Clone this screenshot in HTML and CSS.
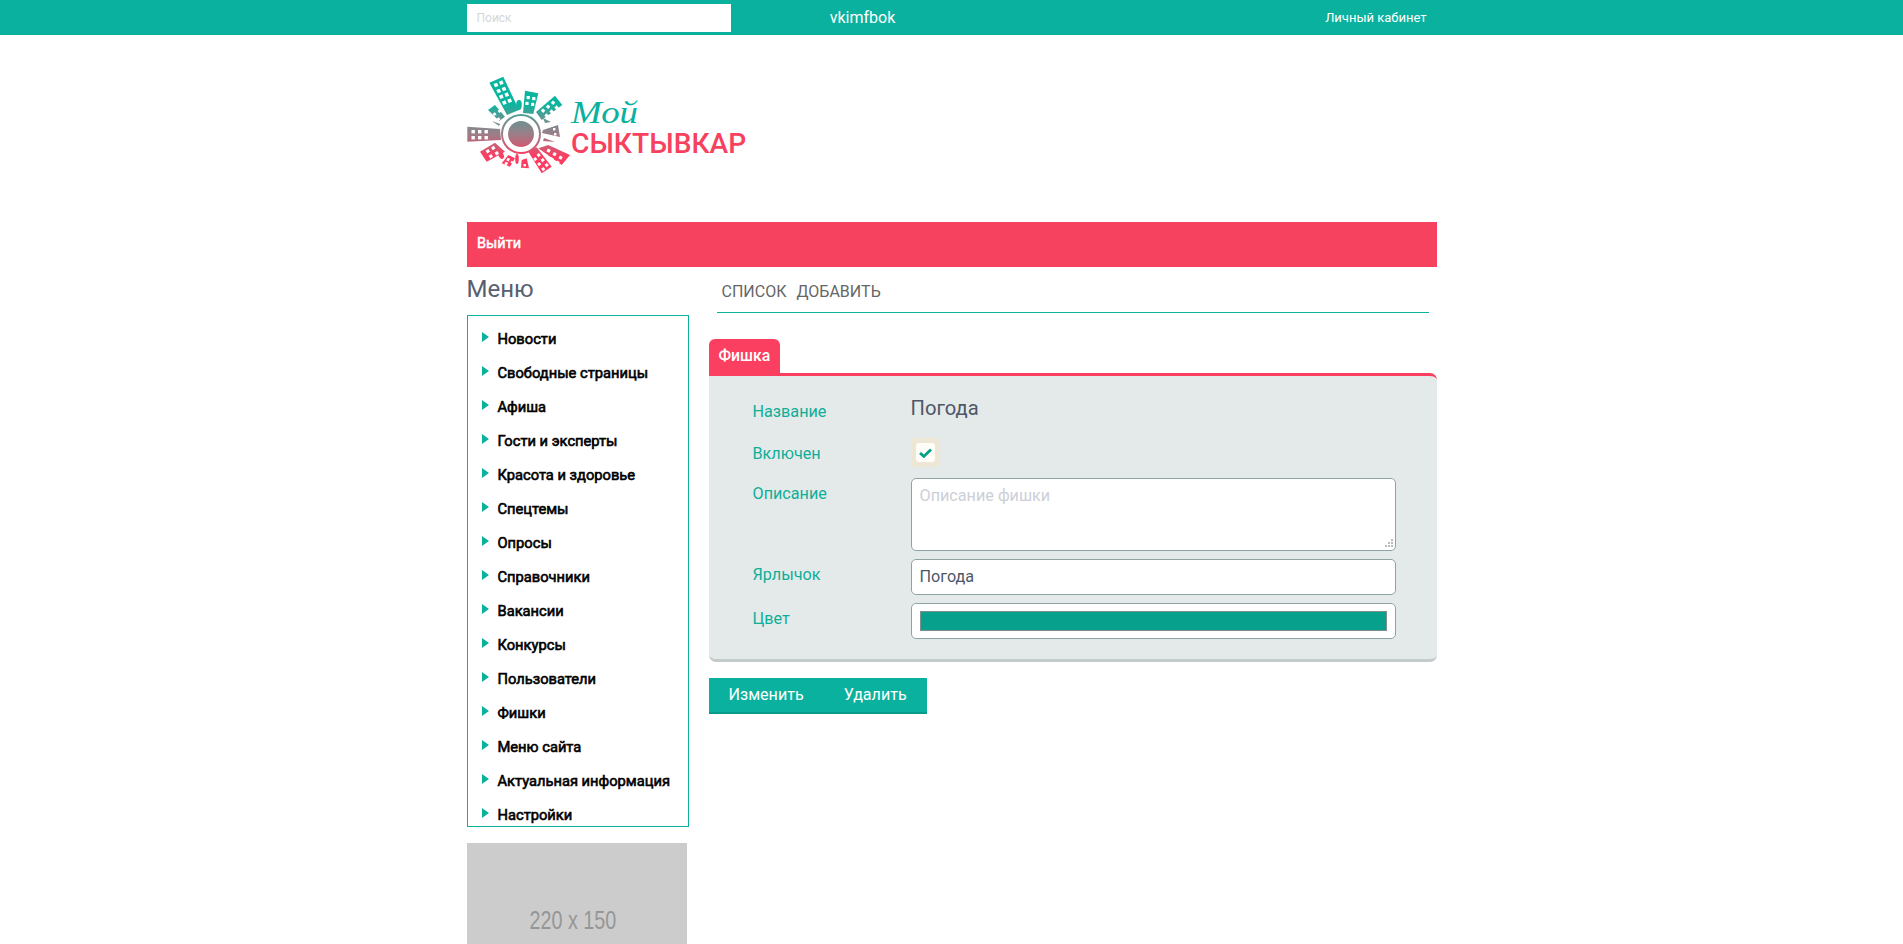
FILE: index.html
```html
<!DOCTYPE html>
<html lang="ru">
<head>
<meta charset="utf-8">
<title>Мой Сыктывкар</title>
<link rel="stylesheet" href="styles.css">
</head>
<body>
<header class="topbar">
  <div class="wrap topbar-in">
    <div class="search">Поиск</div>
    <div class="user">vkimfbok</div>
    <a class="cabinet">Личный кабинет</a>
  </div>
</header>
<div class="wrap">
  <div class="logo">
    <svg class="logo-svg" width="290" height="102" viewBox="0 0 290 102">
      <defs>
        <linearGradient id="lg" gradientUnits="userSpaceOnUse" x1="0" y1="0" x2="0" y2="98">
          <stop offset="0.29" stop-color="#0ab5a0"/>
          <stop offset="0.46" stop-color="#6f9090"/>
          <stop offset="0.59" stop-color="#9a7f88"/>
          <stop offset="0.82" stop-color="#fb3d62"/>
        </linearGradient>
      </defs>
      <g fill="url(#lg)">
        <circle cx="54" cy="58" r="20"/>
        <path d="M22.3 6.7 L36.3 .7 L52 34 L40 39 Z"/>
        <path d="M58 14.7 L71.3 17.3 L66.3 38 L56 37 Z"/>
        <ellipse cx="52" cy="29" rx="2.8" ry="5"/>
        <path d="M88 19.7 L95.3 29 L74.7 44 L69 36 Z"/>
        <path d="M21 34 L28 29 L38 40.7 L32.3 45 Z"/>
        <path d="M25 45 L33 48 L32 50 Z"/>
        <path d="M76 42 L84 46 L78 47 Z"/>
        <path d="M0.3 50.7 L33 53 L34 64 L0.3 65.7 Z"/>
        <path d="M76 54 L91 49 L93 61 L75 57 Z"/>
        <path d="M77 62 L88 66 L76 65 Z"/>
        <path d="M13 75.7 L28 66.7 L38 75.7 L19.7 85.7 Z"/>
        <ellipse cx="34" cy="79" rx="2.6" ry="4" transform="rotate(-25 34 79)"/>
        <path d="M41.3 79 L48 82.3 L43 90.7 L34.7 87.3 Z"/>
        <ellipse cx="50" cy="83" rx="1.8" ry="5"/>
        <path d="M54.7 84 L59.7 82.3 L62 92.3 L54 91.7 Z"/>
        <path d="M61.3 75.7 L69.7 71.3 L84.7 90.7 L74.7 97.3 Z"/>
        <path d="M71.3 72.3 L81.3 69 L103 79 L94.7 89 Z"/>
      </g>
      <circle cx="54" cy="58" r="18" fill="#fff"/>
      <circle cx="54" cy="58" r="13" fill="url(#lg)"/>
      <g fill="#fff">
        <rect x="27.2" y="7.2" width="3.6" height="3.6" transform="rotate(-23 29 9)"/>
        <rect x="32.5" y="4.9" width="3.6" height="3.6" transform="rotate(-23 34.3 6.7)"/>
        <rect x="29.9" y="13.2" width="3.6" height="3.6" transform="rotate(-23 31.7 15)"/>
        <rect x="35.2" y="11.2" width="3.6" height="3.6" transform="rotate(-23 37 13)"/>
        <rect x="32.5" y="18.9" width="3.6" height="3.6" transform="rotate(-23 34.3 20.7)"/>
        <rect x="37.9" y="16.9" width="3.6" height="3.6" transform="rotate(-23 39.7 18.7)"/>
        <rect x="35.5" y="24.9" width="3.6" height="3.6" transform="rotate(-23 37.3 26.7)"/>
        <rect x="40.9" y="22.9" width="3.6" height="3.6" transform="rotate(-23 42.7 24.7)"/>
        <rect x="59.6" y="20" width="3.2" height="3.2"/><rect x="65.2" y="21" width="3.2" height="3.2"/>
        <rect x="58.4" y="25.8" width="3.2" height="3.2"/><rect x="64" y="26.8" width="3.2" height="3.2"/>
        <rect x="84.5" y="25" width="3.2" height="3.2" transform="rotate(40 86 26.6)"/>
        <rect x="79.5" y="29" width="3.2" height="3.2" transform="rotate(40 81 30.6)"/>
        <rect x="74.5" y="33" width="3.2" height="3.2" transform="rotate(40 76 34.6)"/>
        <rect x="88" y="30" width="3.2" height="3.2" transform="rotate(40 89.6 31.6)"/>
        <rect x="83" y="34" width="3.2" height="3.2" transform="rotate(40 84.6 35.6)"/>
        <rect x="78" y="38" width="3.2" height="3.2" transform="rotate(40 79.6 39.6)"/>
        <rect x="26" y="37" width="2.8" height="2.8" transform="rotate(-35 27 38)"/>
        <rect x="30" y="42" width="2.8" height="2.8" transform="rotate(-35 31 43)"/>
        <rect x="31" y="34" width="2.8" height="2.8" transform="rotate(-35 32 35)"/>
        <rect x="4.5" y="54" width="3.4" height="3.4"/><rect x="11" y="54" width="3.4" height="3.4"/><rect x="17.5" y="54" width="3.4" height="3.4"/>
        <rect x="4.5" y="60" width="3.4" height="3.4"/><rect x="11" y="60" width="3.4" height="3.4"/><rect x="17.5" y="60" width="3.4" height="3.4"/>
        <rect x="86" y="52" width="2.4" height="2.4"/><rect x="87" y="57" width="2.4" height="2.4"/>
        <rect x="19" y="74" width="3.2" height="3.2" transform="rotate(-30 20 75)"/>
        <rect x="24.5" y="71" width="3.2" height="3.2" transform="rotate(-30 25 72)"/>
        <rect x="22" y="79" width="3.2" height="3.2" transform="rotate(-30 23 80)"/>
        <rect x="28" y="76" width="3.2" height="3.2" transform="rotate(-30 29 77)"/>
        <rect x="40" y="82" width="2.8" height="2.8" transform="rotate(25 41 83)"/>
        <rect x="44" y="85" width="2.4" height="2.4" transform="rotate(25 45 86)"/>
        <rect x="38" y="86" width="2.8" height="2.8" transform="rotate(25 39 87)"/>
        <rect x="56.5" y="88" width="2.4" height="2.4"/>
        <rect x="70" y="78" width="3" height="3" transform="rotate(-38 71 79)"/>
        <rect x="74" y="83" width="3" height="3" transform="rotate(-38 75 84)"/>
        <rect x="78" y="88" width="3" height="3" transform="rotate(-38 79 89)"/>
        <rect x="66.5" y="82" width="3" height="3" transform="rotate(-38 67.5 83)"/>
        <rect x="70.5" y="87" width="3" height="3" transform="rotate(-38 71.5 88)"/>
        <rect x="74.5" y="92" width="3" height="3" transform="rotate(-38 75.5 93)"/>
        <rect x="80" y="73" width="3.2" height="3.2" transform="rotate(30 81.6 74.6)"/>
        <rect x="86" y="76.5" width="3.2" height="3.2" transform="rotate(30 87.6 78)"/>
        <rect x="92" y="80" width="3.2" height="3.2" transform="rotate(30 93.6 81.6)"/>
        <rect x="77" y="78" width="3.2" height="3.2" transform="rotate(30 78.6 79.6)"/>
        <rect x="83" y="81.5" width="3.2" height="3.2" transform="rotate(30 84.6 83)"/>
        <rect x="89" y="85" width="3.2" height="3.2" transform="rotate(30 90.6 86.6)"/>
      </g>
      <text x="104" y="47" class="logo-moi" textLength="67" lengthAdjust="spacingAndGlyphs">Мой</text>
      <text x="104" y="77" class="logo-city">СЫКТЫВКАР</text>
    </svg>
  </div>
  <div class="redbar"><a>Выйти</a></div>
  <div class="columns">
    <aside class="side">
      <h2 class="side-title">Меню</h2>
      <ul class="menu">
        <li>Новости</li>
        <li>Свободные страницы</li>
        <li>Афиша</li>
        <li>Гости и эксперты</li>
        <li>Красота и здоровье</li>
        <li>Спецтемы</li>
        <li>Опросы</li>
        <li>Справочники</li>
        <li>Вакансии</li>
        <li>Конкурсы</li>
        <li>Пользователи</li>
        <li>Фишки</li>
        <li>Меню сайта</li>
        <li>Актуальная информация</li>
        <li>Настройки</li>
      </ul>
      <div class="holder"><span>220 x 150</span></div>
    </aside>
    <main class="content">
      <nav class="subnav"><a>СПИСОК</a><a>ДОБАВИТЬ</a></nav>
      <div class="tab">Фишка</div>
      <section class="panel">
        <div class="row row-name"><div class="lbl">Название</div><div class="title-val">Погода</div></div>
        <div class="row row-check"><div class="lbl">Включен</div>
          <div class="check"><div class="check-in">
            <svg width="13" height="10" viewBox="0 0 13 10"><path d="M1 5 L4.8 8.4 L12 1.4" fill="none" stroke="#06a088" stroke-width="2.8"/></svg>
          </div></div>
        </div>
        <div class="row row-desc"><div class="lbl">Описание</div>
          <div class="field area"><span class="ph">Описание фишки</span>
            <svg class="grip" width="9" height="9" viewBox="0 0 9 9"><path fill="#bbb" d="M7 0h2v2H7zM4 3h2v2H4zM7 3h2v2H7zM1 6h2v2H1zM4 6h2v2H4zM7 6h2v2H7z"/></svg>
          </div>
        </div>
        <div class="row row-label"><div class="lbl">Ярлычок</div><div class="field single">Погода</div></div>
        <div class="row row-color"><div class="lbl">Цвет</div><div class="field swatch-wrap"><div class="swatch"></div></div></div>
      </section>
      <div class="buttons"><a>Изменить</a><a>Удалить</a></div>
    </main>
  </div>
</div>
</body>
</html>
```

FILE: styles.css
```css
* { box-sizing: border-box; }
html, body { margin: 0; padding: 0; }
body { font-family: Roboto, "Liberation Sans", sans-serif; background: #fff; color: #4d5460; height: 944px; overflow: hidden; }
.wrap { width: 970px; margin: 0 auto; }
.topbar { background: #0ab19e; height: 35px; }
.topbar-in { display: flex; align-items: center; height: 35px; position: relative; }
.search { width: 264px; height: 28px; background: #fff; color: #d3d7da; font-size: 12px; line-height: 28px; padding-left: 10px; margin-top: 1px; }
.user { width: 264px; text-align: center; color: #fff; font-size: 16px; }
.cabinet { margin-left: auto; margin-right: 10px; color: #fff; font-size: 13px; }
.logo { height: 187px; padding-top: 41px; }
.logo-svg { display: block; overflow: visible; }
.logo-moi { font-family: "Liberation Serif", serif; font-style: italic; font-size: 31px; fill: #0ab19e; }
.logo-city { font-family: Roboto, sans-serif; font-size: 28.2px; font-weight: 500; fill: #f8415f; }
.redbar { background: #f7425f; height: 45px; line-height: 44px; padding-left: 10.5px; color: #fff; font-size: 14.5px; -webkit-text-stroke: 0.5px #fff; }
.columns { display: flex; }
.side { width: 222px; flex: none; }
.side-title { margin: 0; font-size: 24px; font-weight: 400; line-height: 44px; height: 48px; color: #566070; }
.menu { list-style: none; margin: 0; padding: 6px 0 0; border: 1px solid #0ab19e; height: 512px; overflow: hidden; }
.menu li { height: 34px; line-height: 34px; padding-left: 30px; color: #000; font-size: 14.7px; -webkit-text-stroke: 0.6px #000; position: relative; }
.menu li::before { content: ""; position: absolute; left: 14px; top: 10px; border-left: 7.5px solid #0ab19e; border-top: 5px solid transparent; border-bottom: 5px solid transparent; -webkit-text-stroke: 0; }
.holder { width: 220px; height: 150px; margin-top: 16px; background: #ccc; display: flex; align-items: center; justify-content: center; padding: 5px 7px 0 0; }
.holder span { font-family: "Liberation Sans", sans-serif; color: #969696; font-size: 25px; transform: scaleX(0.79); }
.content { width: 728px; margin-left: 20px; flex: none; }
.subnav { margin: 0 8px; height: 46px; border-bottom: 1px solid #0ab19e; padding: 12px 5px 0; font-size: 16px; color: #666; line-height: 25px; display: flex; gap: 10px; }
.tab { margin-top: 26px; width: 71px; height: 34px; background: #fb3f61; color: #fff; border-radius: 6px 6px 0 0; font-size: 15.8px; font-weight: 500; line-height: 33px; padding-left: 10px; }
.panel { background: #e4eaea; border-top: 3px solid #fb3f61; border-bottom: 3px solid #c3cbcb; border-radius: 0 7px 7px 7px; height: 289px; padding: 0 41px 0 44px; }
.row { display: flex; }
.lbl { width: 158px; color: #0fae98; font-size: 16.2px; flex: none; }
.row-name { height: 58px; padding-top: 26px; align-items: flex-start; }
.title-val { font-size: 20.2px; margin-top: -6px; color: #4e5768; }
.row-check { height: 44px; }
.check { flex: none; width: 29px; height: 29px; background: #efe7d5; border-radius: 4px; padding: 5px; margin-top: 4px; }
.check-in { width: 19px; height: 19px; background: #fffdf8; border-radius: 3px; display: flex; align-items: center; justify-content: center; }
.row-check .lbl { padding-top: 10px; }
.field { flex: 1; background: #fff; border: 1px solid #8fa3a3; border-radius: 5px; font-size: 16.2px; color: #4e5768; padding: 0 8px; position: relative; }
.row-desc { height: 81px; }
.row-desc .lbl { padding-top: 6px; }
.area { height: 73px; padding-top: 7px; }
.ph { color: #ccd0d8; }
.grip { position: absolute; right: 2px; bottom: 2px; }
.row-label { height: 44px; }
.row-label .lbl { padding-top: 6px; }
.single { height: 36px; line-height: 34px; }
.row-color .lbl { padding-top: 6px; }
.swatch-wrap { height: 36px; padding: 7px 8px; }
.swatch { height: 20px; background: #06a08c; border: 1px solid #7f8f8f; }
.buttons { margin-top: 16px; display: inline-flex; gap: 0; background: #0ab19e; height: 36px; border-bottom: 2px solid #089a8a; color: #fff; font-size: 16.1px; line-height: 33px; }
.buttons a { padding: 0 20px; }
```
